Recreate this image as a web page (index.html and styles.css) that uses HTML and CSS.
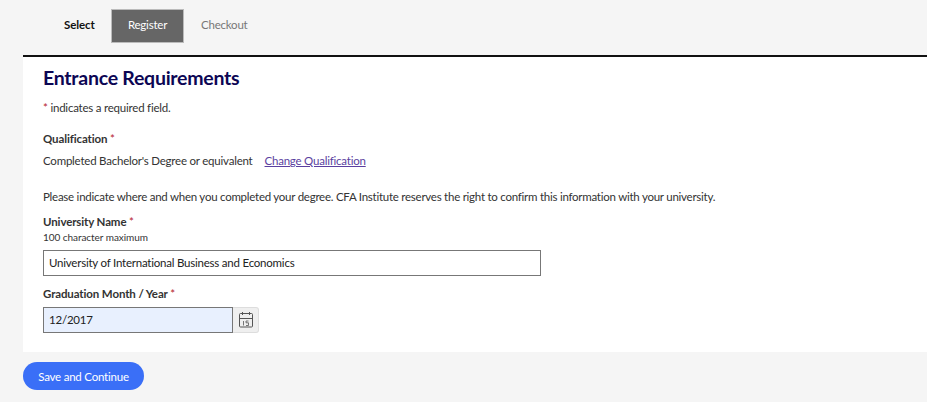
FILE: index.html
```html
<!DOCTYPE html>
<html lang="en">
<head>
<meta charset="utf-8">
<title>Entrance Requirements</title>
<link rel="stylesheet" href="styles.css">
</head>
<body>
<nav class="steps">
  <span class="step step-done">Select</span>
  <span class="step step-active">Register</span>
  <span class="step step-next">Checkout</span>
</nav>
<main class="panel">
  <h1 class="title">Entrance Requirements</h1>
  <p class="note"><span class="req">*</span> indicates a required field.</p>
  <div class="label qual-label">Qualification <span class="req">*</span></div>
  <p class="qual-row"><span>Completed Bachelor's Degree or equivalent</span><a class="link" href="#">Change Qualification</a></p>
  <p class="intro">Please indicate where and when you completed your degree. CFA Institute reserves the right to confirm this information with your university.</p>
  <div class="label">University Name <span class="req">*</span></div>
  <div class="hint">100 character maximum</div>
  <input class="field field-name" type="text" value="University of International Business and Economics">
  <div class="label grad-label">Graduation Month / Year <span class="req">*</span></div>
  <div class="date-row">
    <input class="field field-date" type="text" value="12/2017">
    <button class="cal-btn" type="button" aria-label="Open calendar">
      <svg width="18" height="18" viewBox="0 0 18 18" fill="none" stroke="#555" stroke-width="1">
        <rect x="2.500" y="2.500" width="13" height="13.500" rx="1"/>
        <path d="M2.500 7.500h13M5.500 1v3M12.500 1v3"/>
        <path d="M6.500 10v4.500M11.500 10H9v1.800h2.500v2.700H9" stroke-width=".8"/>
      </svg>
    </button>
  </div>
</main>
<div class="actions"><button class="save" type="button">Save and Continue</button></div>
</body>
</html>
```
FILE: styles.css
```css
* { box-sizing: border-box; }
html, body { margin: 0; height: 100%; }
body {
  background: #f5f5f5;
  font-family: Lato, "Liberation Sans", sans-serif;
  font-size: 11.500px;
  letter-spacing: -.22px;
  color: #333;
  overflow: hidden;
}
.steps {
  display: flex;
  align-items: center;
  height: 55px;
  padding: 9px 0 12px 47px;
}
.step {
  display: flex;
  align-items: center;
  height: 34px;
  padding: 0 0 3px;
}
.step-done { color: #111; font-weight: 700; letter-spacing: -.1px; width: 64px; padding-left: 17px; }
.step-active {
  justify-content: center;
  width: 73px;
  background: #666;
  color: #fff;
  border: 1px solid #bbb;
}
.step-next { color: #777; margin-left: 17px; }
.panel {
  margin-left: 23px;
  height: 297px;
  background: #fff;
  border-top: 2px solid #111;
  padding: 9px 20px 0;
}
.title {
  margin: 0;
  font-size: 19.500px;
  letter-spacing: -.25px;
  line-height: 24px;
  font-weight: 700;
  color: #0c0654;
}
.note { margin: 10px 0 0; line-height: 16px; }
.req { color: #b5222d; }
.label { font-weight: 700; letter-spacing: -.12px; line-height: 16px; color: #333; }
.label .req { font-weight: 400; }
.qual-label { margin-top: 15px; }
.qual-row { margin: 6px 0 0; line-height: 16px; }
.link { margin-left: 12px; color: #5b3fa0; text-decoration: underline; }
.intro { margin: 20px 0 0; line-height: 16px; letter-spacing: -.25px; }
.panel .intro + .label { margin-top: 9px; }
.hint { font-size: 10px; letter-spacing: -.05px; line-height: 12px; margin-top: 1px; }
.field {
  display: block;
  height: 26px;
  border: 1px solid #777;
  padding: 0 5px 2px;
  font: 11.500px Lato, "Liberation Sans", sans-serif;
  letter-spacing: -.22px;
  color: #222;
  background: #fff;
  outline: none;
}
.field-name { width: 498px; margin-top: 7px; }
.grad-label { margin-top: 10px; }
.date-row { display: flex; margin-top: 5px; }
.field-date { width: 190px; background: #e8f0fe; }
.cal-btn {
  display: flex;
  align-items: center;
  justify-content: center;
  width: 26px;
  height: 26px;
  padding: 0;
  background: #efefef;
  border: 1px solid #ddd;
  border-left: 0;
  border-radius: 0 3px 3px 0;
}
.actions { margin: 10px 0 0 23px; }
.save {
  height: 28px;
  width: 121px;
  border: 0;
  border-radius: 14px;
  background: #3a6ff7;
  color: #fff;
  font: 11.500px Lato, "Liberation Sans", sans-serif;
  letter-spacing: -.22px;
}
```
